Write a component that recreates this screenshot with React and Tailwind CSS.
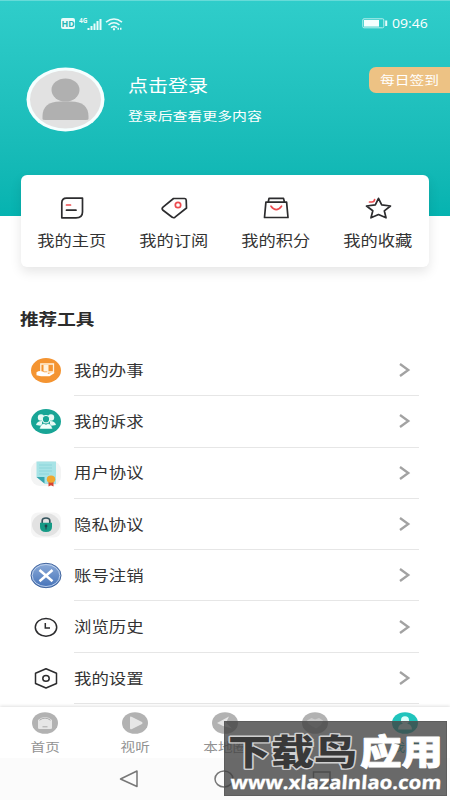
import React from "react";

const ICON = "block overflow-visible";

function Txt({ children, className = "" }) {
  return <span className={"inline-block whitespace-nowrap leading-none scale-x-[1.2] " + className}>{children}</span>;
}

function StatusBar() {
  return (
    <div className="flex h-[45px] items-center pl-[61px] pr-[21px] text-white">
      <div className="flex w-[14px] h-[11px] items-center justify-center rounded-[2px] bg-[#e8fbfa] text-[8px] font-bold text-[#25b5b3] leading-none">
        <span className="scale-x-110">HD</span>
      </div>
      <svg className="ml-[4px]" width="24" height="14" viewBox="0 0 24 14">
        <text x="0" y="6" fontSize="6.5" fontWeight="bold" fill="#e8fbfa">4G</text>
        <g fill="#e8fbfa">
          <rect x="8.5" y="11" width="2" height="2" /><rect x="11.5" y="9" width="2" height="4" />
          <rect x="14.5" y="6.5" width="2" height="6.5" /><rect x="17.5" y="4" width="2" height="9" />
          <rect x="20.5" y="2" width="2" height="11" />
        </g>
      </svg>
      <svg className="ml-[2px]" width="19" height="14" viewBox="0 0 19 14" fill="none" stroke="#e8fbfa" strokeWidth="1.6">
        <path d="M1 5.2Q9 -1.2 17 5.2M3.5 8Q9 3.5 14.5 8M6 10.6Q9 8 12 10.6" />
        <path d="M8 12.2h2M12.5 11.8h1.5M15 11.8h1.5" strokeWidth="2" />
      </svg>
      <svg className="ml-auto" width="26" height="11" viewBox="0 0 26 11">
        <rect x=".8" y=".8" width="21" height="9" rx="1.2" fill="none" stroke="#b8efed" strokeWidth="1" />
        <rect x="2" y="2" width="15" height="6.6" fill="#f4fffe" />
        <rect x="23.2" y="2.5" width="2" height="5.5" fill="#e8fbfa" />
      </svg>
      <span className="ml-[4px] w-[37px] font-['Open_Sans',sans-serif] text-[12px] leading-none"><span className="inline-block origin-left scale-x-[1.17]">09:46</span></span>
    </div>
  );
}

const shortcuts = [
  ["我的主页", <><path d="M6.5 1.2H22.5V15Q22.5 20.8 16 20.8H1.8V6Q1.8 1.2 6.5 1.2Z" /><path d="M6.5 13.2H16" /><path d="M6.5 8h4" stroke="#ed4b4f" /></>],
  ["我的订阅", <><path d="M11.5 1.5H22.5Q24 1.5 24.2 3L24.5 11L13 20.2Q11.5 21.3 10.2 20.2L.7 13Q-.5 11.6 1 10.2Z" /><circle cx="16" cy="8" r="2.7" stroke="#ed4b4f" /></>],
  ["我的积分", <><path d="M4.2 5.2L5 1.4H19.5L20.5 5.2M1.9 5.2H22.6L24 20.5H.5Z" /><path d="M7 9.2Q12.3 16 17.5 9.2" stroke="#ed4b4f" /></>],
  ["我的收藏", <><path d="M12.5 1.3L15.7 7.9L24.5 9L18.3 13.8L20 20.8L12.5 17.5L5 20.8L6.8 13.8L.5 9L9.3 7.9Z" /><path d="M3.5 5H6Q8.3 5 8.6 2.5" stroke="#ed4b4f" /></>],
];

function Shortcuts() {
  return (
    <div className="relative z-10 ml-[21px] mt-[-41px] grid h-[92px] w-[408px] grid-cols-4 rounded-[6px] bg-white shadow-[0_5px_12px_rgba(0,0,0,0.1)]">
      {shortcuts.map(([label, art]) => (
        <div key={label} className="flex flex-col items-center pt-[22px]">
          <svg className={ICON} width="25" height="22" viewBox="0 0 25 22" fill="none" stroke="#2c2c2e" strokeWidth="1.7" strokeLinejoin="round" strokeLinecap="round">{art}</svg>
          <Txt className="mt-[15px] text-[14.4px] text-[#333]">{label}</Txt>
        </div>
      ))}
    </div>
  );
}

const toolIcons = {
  work: <><ellipse cx="16" cy="13.5" rx="15" ry="12.5" fill="#f49431" /><path d="M10.8 14V7H23.5V15H17" fill="none" stroke="#fff2dd" strokeWidth="1.3" /><path d="M13.5 8h5v6.5h-5z" fill="#fff2dd" /><path d="M6.5 15.2Q9 13.5 12 14.2L14 15.3H17.5Q18.8 16 17.5 16.7H14.5H18.5L23 15.2Q25 15 24.2 16.3L19.5 19.3H11L6.5 18.3Z" fill="#fff" /></>,
  people: <><ellipse cx="16" cy="13.5" rx="15" ry="12.5" fill="#18a596" /><g fill="#e9faf5"><circle cx="11" cy="9.5" r="3.2" /><circle cx="21" cy="9.5" r="3.2" /><path d="M6 17q1-4 6-4v5zM26 17q-1-4-6-4v5z" /></g><circle cx="16" cy="11.2" r="3.7" fill="#18a596" stroke="#e9faf5" strokeWidth="1.2" /><path d="M9.5 21q1-5 4.5-5.5l2 1 2-1q3.5.5 4.5 5.5z" fill="#f1fffb" stroke="#18a596" strokeWidth=".5" /></>,
  paper: <><rect x="1" y="1" width="30" height="25" rx="9" fill="#f3f4f4" /><path d="M6.5 1.5H26V24H15L6.5 17z" fill="#a7e3e6" /><path d="M9 5h13M9 8h13M9 11h13M9 14h10" stroke="#86d2d7" strokeWidth=".8" /><path d="M6.5 17H14.5V23.5Z" fill="#35a5ad" /><path d="M18.5 21h5v5.5l-2.5-1.2-2.5 1.2z" fill="#d84432" /><ellipse cx="21" cy="19.2" rx="4.2" ry="3.6" fill="#f0a72f" /></>,
  lock: <><rect x="1" y="1.5" width="30" height="25" rx="7" fill="#f5f5f5" /><ellipse cx="16" cy="13.8" rx="14" ry="11.5" fill="#e2e2e2" /><path d="M12.2 12.5V9.8Q12.2 7 16 7T19.8 9.8V12.5" fill="none" stroke="#34545d" strokeWidth="1.7" /><path d="M10 11.8H22V16Q22 21 16 21T10 16Z" fill="#159a85" /><circle cx="16" cy="15" r="1.4" fill="#24434b" /><path d="M15.5 15h1v3.5h-1z" fill="#24434b" /></>,
  close: <><defs><linearGradient id="blue" x2="0" y2="1"><stop stopColor="#8cabd9" /><stop offset="1" stopColor="#4472b8" /></linearGradient></defs><ellipse cx="16" cy="13.5" rx="15" ry="12.2" fill="url(#blue)" stroke="#44679f" strokeWidth="1" /><ellipse cx="16" cy="13.5" rx="13.8" ry="11" fill="none" stroke="#c6d7ef" strokeWidth=".9" /><path d="M9.5 8L22.5 19.2M22.5 8L9.5 19.2" stroke="#fff" strokeWidth="2.5" /></>,
  clock: <><ellipse cx="16" cy="13.3" rx="10.7" ry="8.9" fill="none" stroke="#2c2c2e" strokeWidth="1.5" /><path d="M15.3 9V14H20" fill="none" stroke="#2c2c2e" strokeWidth="1.5" /></>,
  settings: <><path d="M16 3.8L26.5 8.3V18.5L16 23L5.5 18.5V8.3Z" fill="none" stroke="#2c2c2e" strokeWidth="1.5" strokeLinejoin="round" /><ellipse cx="16" cy="13.4" rx="3.2" ry="2.8" fill="none" stroke="#2c2c2e" strokeWidth="1.5" /></>,
};

const tools = [
  ["work", "我的办事"], ["people", "我的诉求"], ["paper", "用户协议"], ["lock", "隐私协议"],
  ["close", "账号注销"], ["clock", "浏览历史"], ["settings", "我的设置"],
];

function ToolRow({ icon, label }) {
  return (
    <div className="flex h-[51.3px] pl-[30px]">
      <div className="flex w-[44px] items-center">
        <svg className={ICON} width="32" height="27" viewBox="0 0 32 27">{toolIcons[icon]}</svg>
      </div>
      <div className="flex w-[345px] items-center justify-between border-b border-[#e6e6e6] pr-[9px]">
        <Txt className="origin-left text-[14.5px] text-[#333]">{label}</Txt>
        <svg className={ICON} width="11" height="14" viewBox="0 0 11 14" fill="none" stroke="#a2a2a2" strokeWidth="2.3"><path d="M1 1L9.3 7L1 13" /></svg>
      </div>
    </div>
  );
}

const tabs = [
  ["首页", <><path d="M6 8Q13 2 20 8V16Q20 17 18.5 17H7.5Q6 17 6 16Z" fill="#e6e6e6" /><path d="M7.5 8.2Q13 4 18.5 8.2M10.5 14.8h5" fill="none" stroke="#aaa" /></>],
  ["视听", <path d="M8 5.5Q8 4 10 5L20 10Q21.2 11 20 12L10 17Q8 18 8 16Z" fill="#e6e6e6" />],
  ["本地圈", <path d="M5 11L17 4.5L14 10.5L20 16.5L11 14Z" fill="#e6e6e6" />],
  ["", <path d="M5 8.5L9.5 6L13 7.5L17 6L21 8.5L19 13L14 16.5L6.5 12Z" fill="#cccccc" />],
  ["我的", <><circle cx="13" cy="8.2" r="4" fill="#dcfffb" /><path d="M6 17.5Q6.5 12 10.5 12H15.5Q19.5 12 20 17.5Z" fill="#dcfffb" /></>],
];

function Watermark() {
  return (
    <div className="absolute left-[224px] top-[721px] z-30 h-[75px] w-[223px] overflow-hidden border border-[#555]/60 bg-[#404040]/78">
      <svg className="block" width="221" height="73" viewBox="1 1 221 73" fontWeight="900">
        <g fontFamily="'Noto Sans CJK SC', sans-serif" fontSize="35" strokeLinejoin="round" paintOrder="stroke">
          <text x="4" y="43.5" textLength="129" lengthAdjust="spacingAndGlyphs" fill="#393939" stroke="#d0d0d0" strokeWidth="2.8">下载鸟</text>
          <text x="136" y="43.5" textLength="83" lengthAdjust="spacingAndGlyphs" fill="#fff" stroke="#fff" strokeWidth=".8">应用</text>
        </g>
        <g transform="translate(6 68) skewX(-4)">
          <text textLength="211" lengthAdjust="spacingAndGlyphs" fontFamily="'Open Sans', sans-serif" fontWeight="700" fontSize="18.5" fill="#fff" stroke="#fff" strokeWidth=".3">www.xlazalnlao.com</text>
        </g>
      </svg>
    </div>
  );
}

export default function App() {
  return (
    <main className="relative h-[800px] w-[450px] overflow-hidden bg-white font-['Noto_Sans','Noto_Sans_CJK_SC',sans-serif]">
      <header className="h-[216px] border-t border-[#66dbd8] bg-linear-to-b from-[#2fcdca] to-[#05b3b0]">
        <StatusBar />
        <div className="flex pt-[21px]">
          <svg className="ml-[26px] shrink-0" width="79" height="65" viewBox="0 0 79 65">
            <ellipse cx="39.5" cy="32.5" rx="39" ry="32" fill="#f5ffff" /><ellipse cx="39.5" cy="32.5" rx="35.5" ry="29" fill="#e2e2e2" />
            <ellipse cx="39.5" cy="23" rx="14" ry="11.5" fill="#b0b0b0" /><path d="M16.5 52V49Q17 34.5 34 34.5H45Q62 34.5 62.5 49V52Q62.5 53 60 53H19Q16.5 53 16.5 52Z" fill="#b0b0b0" />
          </svg>
          <div className="ml-[23px] flex flex-col items-start pt-[11px] text-white">
            <Txt className="origin-left text-[16.7px]">点击登录</Txt>
            <Txt className="mt-[16.5px] origin-left text-[12.4px]">登录后查看更多内容</Txt>
          </div>
          <div className="ml-auto flex h-[26px] w-[81px] shrink-0 items-center rounded-l-[7px] bg-[#edc284] pl-[11px] text-white">
            <Txt className="origin-left pt-[2px] text-[12.3px]">每日签到</Txt>
          </div>
        </div>
      </header>
      <Shortcuts />
      <h2 className="flex h-[78px] items-start pl-[20px] pt-[45px]"><Txt className="origin-left text-[15.5px] font-bold text-[#2c2c2c]">推荐工具</Txt></h2>
      <section>{tools.map(([icon, label]) => <ToolRow key={label} icon={icon} label={label} />)}</section>
      <footer className="relative z-20 mt-[3px] bg-white shadow-[0_-1px_3px_rgba(0,0,0,0.12)]">
        <nav className="grid h-[51px] grid-cols-5">
          {tabs.map(([label, art], i) => (
            <div key={i} className={"flex flex-col items-center pt-[5px] " + (i === 4 ? "text-[#15bdb5]" : "text-[#929292]")}>
              <svg className={ICON} width="26" height="22" viewBox="0 0 26 22"><ellipse cx="13" cy="11" rx="13" ry="10.8" fill={i === 4 ? "#20c4bc" : "#b2b2b2"} />{art}</svg>
              {label && <Txt className="mt-[8px] text-[12.2px]">{label}</Txt>}
            </div>
          ))}
        </nav>
        <div className="grid h-[42px] grid-cols-5 items-center bg-[#fbfbfb]">
          <span />
          <svg className="ml-[29px]" width="20" height="20" viewBox="0 0 20 20" fill="none" stroke="#777" strokeWidth="1.5" strokeLinejoin="round"><path d="M1.5 10L18 2V17.5Z" /></svg>
          <svg className="ml-[34px]" width="20" height="18" viewBox="0 0 20 18" fill="none" stroke="#777" strokeWidth="1.5"><ellipse cx="10" cy="9" rx="9" ry="8" /></svg>
          <svg className="ml-[42px]" width="20" height="18" viewBox="0 0 20 18" fill="none" stroke="#777" strokeWidth="1.5"><path d="M1.5 2H18V16H1.5Z" /></svg>
        </div>
      </footer>
      <Watermark />
    </main>
  );
}
